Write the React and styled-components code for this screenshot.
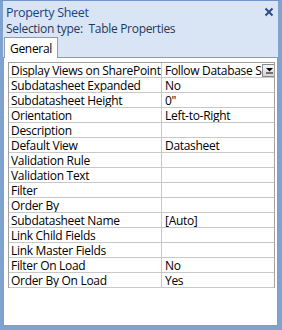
import React from "react";
import styled, { createGlobalStyle } from "styled-components";

const GlobalStyle = createGlobalStyle`
  html, body { margin: 0; padding: 0; background: #ffffff; }
  * { box-sizing: border-box; }
`;

const rows = [
  ["Display Views on SharePoint", "Follow Database S", true],
  ["Subdatasheet Expanded", "No"],
  ["Subdatasheet Height", "0\""],
  ["Orientation", "Left-to-Right"],
  ["Description", ""],
  ["Default View", "Datasheet"],
  ["Validation Rule", ""],
  ["Validation Text", ""],
  ["Filter", ""],
  ["Order By", ""],
  ["Subdatasheet Name", "[Auto]"],
  ["Link Child Fields", ""],
  ["Link Master Fields", ""],
  ["Filter On Load", "No"],
  ["Order By On Load", "Yes"],
];

const Window = styled.div`
  width: 282px;
  height: 330px;
  display: flex;
  flex-direction: column;
  background: #d9e5f4;
  border-left: 3px solid #7fa2d0;
  border-right: 4px solid #7fa2d0;
  border-bottom: 4px solid #7fa2d0;
  border-top: 1px solid #6f95c9;
  font-family: "Open Sans", "Noto Sans", sans-serif;
  font-size: 12px;
  letter-spacing: -0.3px;
  color: #000;
`;

const TitleBar = styled.div`
  height: 20px;
  display: flex;
  align-items: center;
  justify-content: space-between;
  padding: 2px 4px 0 3px;
  color: #15428b;
  font-size: 12.5px;
`;

const Subtitle = styled.div`
  height: 15px;
  display: flex;
  align-items: center;
  padding-left: 3px;
  color: #1e395b;
  white-space: pre;
`;

const Tabs = styled.div`
  display: flex;
  padding: 0 0 0 1px;
  margin-top: 1px;
`;

const Tab = styled.div`
  height: 21px;
  padding: 0 5px 0 5px;
  display: flex;
  align-items: center;
  background: #ffffff;
  border: 1px solid #8e9bab;
  border-bottom: none;
  margin-bottom: -1px;
  position: relative;
  z-index: 1;
`;

const Panel = styled.div`
  flex: 1;
  background: #ffffff;
  border: 1px solid #8e9bab;
  padding: 4px 2px 0 4px;
`;

const Grid = styled.div`
  display: grid;
  grid-template-columns: 152px 1fr;
  border-top: 1px solid #a0a0a0;
  border-left: 1px solid #a0a0a0;
  border-right: 1px solid #a0a0a0;
`;

const Cell = styled.div`
  height: 15px;
  line-height: 15px;
  padding-left: ${(p) => (p.$value ? "3px" : "2px")};
  border-bottom: 1px solid #c8c8c8;
  border-left: ${(p) => (p.$value ? "1px solid #c8c8c8" : "none")};
  white-space: nowrap;
  overflow: hidden;
  display: flex;
  align-items: center;
  justify-content: space-between;
`;

const DropButton = styled.span`
  flex: none;
  width: 16px;
  height: 13px;
  border: 1px solid #8a8a8a;
  background: linear-gradient(#f6f6f6, #d6d6d6);
  display: flex;
  align-items: center;
  justify-content: center;
`;

export default function App() {
  return (
    <>
      <GlobalStyle />
      <Window>
        <TitleBar>
          <span>Property Sheet</span>
          <svg width="10" height="10" viewBox="0 0 10 10">
            <path d="M1.5 1.5L8.5 8.5M8.5 1.5L1.5 8.5" stroke="#2a4d86" strokeWidth="2" />
          </svg>
        </TitleBar>
        <Subtitle>Selection type:  Table Properties</Subtitle>
        <Tabs>
          <Tab>General</Tab>
        </Tabs>
        <Panel>
          <Grid>
            {rows.map(([name, value, drop]) => (
              <React.Fragment key={name}>
                <Cell>{name}</Cell>
                <Cell $value>
                  <span>{value}</span>
                  {drop && (
                    <DropButton>
                      <svg width="9" height="7" viewBox="0 0 9 7">
                        <path d="M1 1h7L4.5 4.5z" fill="#000" />
                        <rect x="1" y="5.5" width="7" height="1" fill="#000" />
                      </svg>
                    </DropButton>
                  )}
                </Cell>
              </React.Fragment>
            ))}
          </Grid>
        </Panel>
      </Window>
    </>
  );
}
